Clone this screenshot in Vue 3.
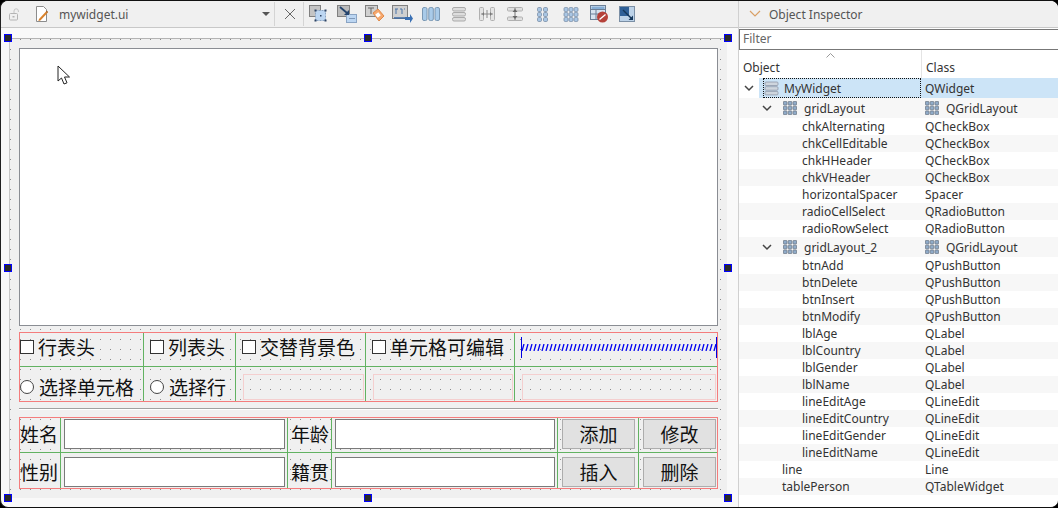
<script setup>
const tree = [
  { name: 'gridLayout', cls: 'QGridLayout', depth: 1, group: true },
  { name: 'chkAlternating', cls: 'QCheckBox', depth: 2 },
  { name: 'chkCellEditable', cls: 'QCheckBox', depth: 2 },
  { name: 'chkHHeader', cls: 'QCheckBox', depth: 2 },
  { name: 'chkVHeader', cls: 'QCheckBox', depth: 2 },
  { name: 'horizontalSpacer', cls: 'Spacer', depth: 2 },
  { name: 'radioCellSelect', cls: 'QRadioButton', depth: 2 },
  { name: 'radioRowSelect', cls: 'QRadioButton', depth: 2 },
  { name: 'gridLayout_2', cls: 'QGridLayout', depth: 1, group: true },
  { name: 'btnAdd', cls: 'QPushButton', depth: 2 },
  { name: 'btnDelete', cls: 'QPushButton', depth: 2 },
  { name: 'btnInsert', cls: 'QPushButton', depth: 2 },
  { name: 'btnModify', cls: 'QPushButton', depth: 2 },
  { name: 'lblAge', cls: 'QLabel', depth: 2 },
  { name: 'lblCountry', cls: 'QLabel', depth: 2 },
  { name: 'lblGender', cls: 'QLabel', depth: 2 },
  { name: 'lblName', cls: 'QLabel', depth: 2 },
  { name: 'lineEditAge', cls: 'QLineEdit', depth: 2 },
  { name: 'lineEditCountry', cls: 'QLineEdit', depth: 2 },
  { name: 'lineEditGender', cls: 'QLineEdit', depth: 2 },
  { name: 'lineEditName', cls: 'QLineEdit', depth: 2 },
  { name: 'line', cls: 'Line', depth: 0 },
  { name: 'tablePerson', cls: 'QTableWidget', depth: 0 }
]

const handles = [
  [8, 38], [368, 38], [728, 38],
  [8, 268], [728, 268],
  [8, 498], [368, 498], [728, 498]
]

// dots of the grid-layout icon
const dots3 = [0, 1, 2].flatMap((y) => [0, 1, 2].map((x) => [x, y]))
</script>

<template>
  <div class="designer">
    <div class="left">
      <div class="toolbar">
        <svg class="lock" width="12" height="13" viewBox="0 0 12 13">
          <rect x="1.5" y="5.5" width="8" height="6.5" rx="1" fill="none" stroke="#b4b4b4" />
          <path d="M6 5V3a2.2 2.2 0 0 1 4.4 0v1" fill="none" stroke="#c4c4c4" />
          <rect x="4.5" y="8" width="2" height="1.5" fill="#b4b4b4" />
        </svg>
        <svg class="file" width="14" height="18" viewBox="0 0 14 18">
          <path d="M1.5 1.5h7l3 3v12h-10z" fill="#fff" stroke="#8c8c8c" />
          <path d="M4 14l-.6 2 2-.6 7-7.4-1.4-1.4z" fill="#d9822b" />
          <path d="M11 6.600l1.400 1.400 .8-.9-1.400-1.400z" fill="#a85a14" />
        </svg>
        <span class="file-name">mywidget.ui</span>
        <span class="combo-arrow"></span>
        <span class="sep"></span>
        <svg class="close" width="12" height="12" viewBox="0 0 12 12">
          <path d="M1 1l10 10M11 1L1 11" stroke="#666" fill="none" />
        </svg>
        <span class="sep"></span>
        <div class="tools">
          <!-- edit widgets -->
          <svg width="22" height="20" viewBox="0 0 22 20">
            <rect x="1.500" y="1.500" width="11" height="11" fill="#c4c4c4" stroke="#808080" />
            <rect x="7.500" y="6.500" width="10" height="10" fill="#bcd6f2" stroke="#8aa4c4" stroke-dasharray="2 1" />
            <rect x="6.500" y="5.500" width="2" height="2" fill="#2c4262" />
            <rect x="16.500" y="5.500" width="2" height="2" fill="#2c4262" />
            <rect x="6.500" y="15.500" width="2" height="2" fill="#2c4262" />
            <rect x="16.500" y="15.500" width="2" height="2" fill="#2c4262" />
            <rect x="12" y="11" width="1.500" height="1.500" fill="#2c4262" />
          </svg>
          <!-- edit signals -->
          <svg width="22" height="20" viewBox="0 0 22 20">
            <rect x="1.500" y="1.500" width="12" height="11" fill="#bbb" stroke="#808080" />
            <rect x="10.500" y="10.500" width="10" height="8" fill="#bcd6f2" stroke="#8aa4c4" />
            <path d="M4 3l7 6" stroke="#24446e" stroke-width="1.800" />
            <path d="M8 11h5V6z" fill="#24446e" />
            <path d="M13 14.500h6" stroke="#7f98b8" />
          </svg>
          <!-- edit buddies -->
          <svg width="22" height="20" viewBox="0 0 22 20">
            <rect x="1.500" y="1.500" width="12" height="11" fill="#d0d0d0" stroke="#808080" />
            <path d="M4 4h6M7 4v6" stroke="#666" />
            <path d="M9 9l5-4 6 7-5 5z" fill="#f7a86d" stroke="#e08a4a" />
            <rect x="12" y="9" width="4" height="4" fill="#fff" transform="rotate(-40 14 11)" />
          </svg>
          <!-- edit tab order -->
          <svg width="24" height="20" viewBox="0 0 24 20">
            <rect x="1.500" y="1.500" width="15" height="13" fill="#d0d0d0" stroke="#808080" />
            <path d="M4 5h3M5 5v5M9 5h2v5M13 5h1" stroke="#4a74a8" fill="none" />
            <path d="M3 14h14" stroke="#3d6aa4" stroke-width="1.500" />
            <path d="M14 13h5v-3l3 4.500-3 4.500v-3h-5z" fill="#3a70b4" />
          </svg>
          <!-- vertical columns -->
          <svg width="20" height="20" viewBox="0 0 20 20">
            <rect x="1.500" y="3.500" width="4.500" height="13" rx="1.500" fill="#a9cbe9" stroke="#7a98b4" />
            <rect x="7.800" y="3.500" width="4.500" height="13" rx="1.500" fill="#a9cbe9" stroke="#7a98b4" />
            <rect x="14" y="3.500" width="4.500" height="13" rx="1.500" fill="#a9cbe9" stroke="#7a98b4" />
          </svg>
          <!-- horizontal rows, disabled -->
          <svg width="20" height="20" viewBox="0 0 20 20">
            <rect x="3.500" y="3.500" width="13" height="3.500" rx="1.500" fill="#ddd" stroke="#aaa" />
            <rect x="3.500" y="8.500" width="13" height="3.500" rx="1.500" fill="#ddd" stroke="#aaa" />
            <rect x="3.500" y="13.500" width="13" height="3.500" rx="1.500" fill="#ddd" stroke="#aaa" />
          </svg>
          <!-- splitter h -->
          <svg width="20" height="20" viewBox="0 0 20 20">
            <rect x="2.500" y="3.500" width="4" height="13" rx="1" fill="#e4e4e4" stroke="#b0b0b0" />
            <rect x="13.500" y="3.500" width="4" height="13" rx="1" fill="#e4e4e4" stroke="#b0b0b0" />
            <path d="M4 10h12M10 6v8" stroke="#8a8a8a" />
            <path d="M7 8v4l-2-2zM13 8v4l2-2z" fill="#777" />
          </svg>
          <!-- splitter v -->
          <svg width="20" height="20" viewBox="0 0 20 20">
            <rect x="2.500" y="3.500" width="15" height="3.500" rx="1" fill="#e0e0e0" stroke="#b0b0b0" />
            <rect x="2.500" y="13" width="15" height="3.500" rx="1" fill="#e0e0e0" stroke="#b0b0b0" />
            <path d="M10 4v12" stroke="#777" />
            <path d="M7.500 8h5L10 5zM7.500 12h5L10 15z" fill="#666" />
          </svg>
          <!-- form layout -->
          <svg width="20" height="20" viewBox="0 0 20 20">
            <g v-for="y in [0, 1, 2]" :key="y">
              <rect x="4.500" :y="3.500 + y * 5" width="4" height="4" rx="1.200" fill="#a9c6e4" stroke="#7a8ea6" stroke-width=".8" />
              <rect x="10.500" :y="3.500 + y * 5" width="4" height="4" rx="1.200" fill="#a9c6e4" stroke="#7a8ea6" stroke-width=".8" />
            </g>
          </svg>
          <!-- grid layout -->
          <svg width="20" height="20" viewBox="0 0 20 20">
            <rect v-for="d in dots3" :key="d.join()" :x="3 + d[0] * 5" :y="3.500 + d[1] * 5" width="4" height="4" rx="1.200" fill="#a9c6e4" stroke="#7a8ea6" stroke-width=".8" />
          </svg>
          <!-- break layout -->
          <svg width="22" height="20" viewBox="0 0 22 20">
            <rect x="2.500" y="1.500" width="15" height="14" fill="#d8e4f0" stroke="#6c7f96" />
            <path d="M2.500 5.500h15M2.500 10h15M8 5.500V15.500" stroke="#6c7f96" />
            <rect x="3.500" y="2.500" width="13" height="2.500" fill="#86aed6" />
            <circle cx="14.500" cy="13" r="5.500" fill="#b5423a" />
            <path d="M11.500 15.500l6-5" stroke="#fff" stroke-width="1.400" />
          </svg>
          <!-- adjust size -->
          <svg width="20" height="20" viewBox="0 0 20 20">
            <rect x="2.500" y="2.500" width="15" height="15" fill="#bcd2e8" stroke="#7b8fa5" />
            <rect x="3" y="3" width="9" height="9" fill="#2f6098" />
            <path d="M6 6l9 9" stroke="#14365a" stroke-width="1.400" />
            <path d="M16 16h-4.500L16 11.500z" fill="#14365a" />
          </svg>
        </div>
      </div>

      <div class="stage">
        <div class="form">
          <div class="table-box"></div>

          <div class="layout options">
            <label class="cell first top"><i class="check"></i>行表头</label>
            <label class="cell top"><i class="check"></i>列表头</label>
            <label class="cell top"><i class="check"></i>交替背景色</label>
            <label class="cell top"><i class="check"></i>单元格可编辑</label>
            <div class="cell top spacer-cell">
              <svg class="spring" height="21">
                <defs>
                  <pattern id="coil" width="4" height="7" patternUnits="userSpaceOnUse" y="7">
                    <path d="M1 7l2-7" stroke="#0000f0" stroke-width="1.300" fill="none" />
                  </pattern>
                </defs>
                <rect x="0" y="7" width="100%" height="7" fill="url(#coil)" />
                <rect x="0" y="0" width="1" height="21" fill="#0000e0" />
                <rect x="100%" y="0" width="1" height="21" fill="#0000e0" transform="translate(-1 0)" />
              </svg>
            </div>
            <label class="cell first row2"><i class="radio"></i>选择单元格</label>
            <label class="cell row2"><i class="radio"></i>选择行</label>
            <div class="cell row2 empty"><div class="empty-box"></div></div>
            <div class="cell row2 empty"><div class="empty-box"></div></div>
            <div class="cell row2 empty"><div class="empty-box"></div></div>
          </div>

          <div class="hline"></div>

          <div class="layout fields">
            <span class="cell first top lbl">姓名</span>
            <div class="cell top"><div class="edit"></div></div>
            <span class="cell top lbl">年龄</span>
            <div class="cell top"><div class="edit"></div></div>
            <div class="cell top"><button class="btn">添加</button></div>
            <div class="cell top"><button class="btn last">修改</button></div>
            <span class="cell first row2 lbl">性别</span>
            <div class="cell row2"><div class="edit"></div></div>
            <span class="cell row2 lbl">籍贯</span>
            <div class="cell row2"><div class="edit"></div></div>
            <div class="cell row2"><button class="btn">插入</button></div>
            <div class="cell row2"><button class="btn last">删除</button></div>
          </div>
        </div>

        <svg class="cursor" width="14" height="20" viewBox="0 0 14 20">
          <path d="M1 1v15l3.500-3 2.500 6 3-1.200-2.500-5.800H12.500z" fill="#fff" stroke="#222" stroke-width="1" />
        </svg>
        <span v-for="h in handles" :key="h.join()" class="handle" :style="{ left: h[0] - 5 + 'px', top: h[1] - 32 + 'px' }"></span>
      </div>
    </div>

    <div class="inspector">
      <div class="title">
        <svg width="12" height="8" viewBox="0 0 12 8"><path d="M1 1l5 5 5-5" fill="none" stroke="#d9a066" stroke-width="1.200" /></svg>
        <span>Object Inspector</span>
      </div>
      <div class="filter">Filter</div>
      <div class="header">
        <span class="h-object">Object</span>
        <svg class="caret" width="9" height="5" viewBox="0 0 9 5"><path d="M.5 4.500l4-4 4 4" fill="none" stroke="#999" /></svg>
        <span class="h-class">Class</span>
      </div>

      <div class="root-row">
        <svg class="arrow" width="10" height="7" viewBox="0 0 10 7"><path d="M1 1l4 4 4-4" fill="none" stroke="#444" stroke-width="1.500" /></svg>
        <div class="root-name">
          <svg width="15" height="15" viewBox="0 0 15 15">
            <rect x="1" y="1" width="13" height="3.500" rx="1" fill="#cfd6de" stroke="#8f98a8" stroke-width=".8" />
            <rect x="1" y="5.700" width="13" height="3.500" rx="1" fill="#cfd6de" stroke="#8f98a8" stroke-width=".8" />
            <rect x="1" y="10.400" width="13" height="3.500" rx="1" fill="#cfd6de" stroke="#8f98a8" stroke-width=".8" />
          </svg>
          <span>MyWidget</span>
        </div>
        <span class="root-class">QWidget</span>
      </div>

      <div
        v-for="(row, i) in tree"
        :key="row.name"
        class="row"
        :class="['depth-' + row.depth, { group: row.group, alt: i % 2 === 0 }]"
      >
        <div class="r-name">
          <template v-if="row.group">
            <svg class="arrow" width="10" height="7" viewBox="0 0 10 7"><path d="M1 1l4 4 4-4" fill="none" stroke="#444" stroke-width="1.500" /></svg>
            <svg class="grid-ic" width="14" height="14" viewBox="0 0 14 14">
              <rect v-for="d in dots3" :key="d.join()" :x="d[0] * 4.800 + .4" :y="d[1] * 4.800 + .4" width="3.600" height="3.600" rx=".6" fill="#8fabc9" stroke="#6f7a88" stroke-width=".8" />
            </svg>
          </template>
          <span>{{ row.name }}</span>
        </div>
        <div class="r-class">
          <svg v-if="row.group" class="grid-ic" width="14" height="14" viewBox="0 0 14 14">
            <rect v-for="d in dots3" :key="d.join()" :x="d[0] * 4.800 + .4" :y="d[1] * 4.800 + .4" width="3.600" height="3.600" rx=".6" fill="#8fabc9" stroke="#6f7a88" stroke-width=".8" />
          </svg>
          <span>{{ row.cls }}</span>
        </div>
      </div>
    </div>
  </div>
</template>

<style>
html, body {
  margin: 0;
  background: #000;
}
</style>

<style scoped>
.designer {
  width: 1058px;
  height: 508px;
  display: flex;
  overflow: hidden;
  box-sizing: border-box;
  border-top: 1px solid #111;
  border-bottom: 1px solid #111;
  border-left: 1px solid #222;
  border-radius: 8px;
  background: #f9f9f9;
  font-family: "Noto Sans", "Noto Sans CJK SC", sans-serif;
}

/* left side */
.left {
  width: 737px;
  flex-shrink: 0;
  border-right: 1px solid #d0d0d0;
  display: flex;
  flex-direction: column;
  position: relative;
}

.toolbar {
  height: 26px;
  flex-shrink: 0;
  display: flex;
  align-items: center;
  background: #f0f0f0;
  border-bottom: 1px solid #c8c8c8;
}

.lock {
  margin-left: 7px;
}

.file {
  margin-left: 15px;
}

.file-name {
  margin-left: 10px;
  width: 203px;
  font-size: 12px;
  color: #555;
}

.combo-arrow {
  width: 0;
  height: 0;
  border-left: 4px solid transparent;
  border-right: 4px solid transparent;
  border-top: 4px solid #555;
  margin-right: 4px;
}

.sep {
  width: 1px;
  height: 24px;
  background: #d4d4d4;
}

.close {
  margin: 0 7px 0 9px;
}

.tools {
  display: flex;
  align-items: center;
  margin-left: 3px;
}

.tools svg {
  width: 24px;
  margin-right: 4px;
}

.stage {
  flex: 1;
  position: relative;
  padding: 10px 9px 9px 8px;
}

.form {
  width: 718px;
  height: 460px;
  box-sizing: border-box;
  padding: 10px 9px 0 9px;
  background-color: #f0f0f0;
  background-image: radial-gradient(circle at 0.5px 0.5px, #8c8c8c 0.7px, transparent 0.9px);
  background-size: 10px 10px;
  border-top: 1px solid #b4b4b4;
  border-left: 1px solid #c8c8c8;
  display: flex;
  flex-direction: column;
}

.table-box {
  height: 276px;
  flex-shrink: 0;
  background: #fff;
  border: 1px solid #8a8d93;
  margin-top: -1px;
}

.layout {
  display: grid;
  border: 1px solid #f47c7c;
  box-sizing: border-box;
  flex-shrink: 0;
}

.options {
  margin-top: 6px;
  height: 70px;
  grid-template-columns: 123px 92px 130px 149px 1fr;
  grid-template-rows: 33px 1fr;
}

.fields {
  margin-top: 7px;
  height: 72px;
  grid-template-columns: 40px 227px 44px 226px 81px 1fr;
  grid-template-rows: 34px 1fr;
}

.cell {
  display: flex;
  align-items: center;
  min-width: 0;
  box-sizing: border-box;
  border-left: 1px solid #62b262;
  font-size: 19px;
  color: #111;
  white-space: nowrap;
}

.cell.first {
  border-left: 0;
}

.row2 {
  border-top: 1px solid #62b262;
}

.options .top {
  padding-bottom: 5px;
}

.options .row2 {
  padding-top: 6px;
}

.fields .top {
  padding-bottom: 2px;
}

.fields .row2 {
  padding-top: 3px;
}

.check,
.radio {
  width: 12px;
  height: 12px;
  background: #fff;
  margin: 0 5px 0 6px;
  flex-shrink: 0;
}

.check {
  border: 1px solid #333;
  margin-right: 4px;
}

.radio {
  border: 1px solid #444;
  border-radius: 50%;
}

.first .check,
.first .radio {
  margin-left: 0;
}

.spacer-cell {
  padding-left: 6px;
}

.spring {
  flex: 1;
  min-width: 0;
}

.empty {
  padding-left: 7px;
  padding-right: 1px;
}

.empty-box {
  flex: 1;
  height: 26px;
  box-sizing: border-box;
  border: 1px solid #f4cfcf;
}

.hline {
  margin-top: 6px;
  height: 2px;
  box-sizing: border-box;
  border-top: 1px solid #a0a0a0;
  border-bottom: 1px solid #fff;
  flex-shrink: 0;
}

.lbl {
  padding-left: 3px;
}

.lbl.first {
  padding-left: 0;
}

.edit {
  flex: 1;
  height: 30px;
  box-sizing: border-box;
  margin: 0 2px 0 3px;
  background: #fff;
  border: 1px solid #7a7a7a;
}

.btn {
  flex: 1;
  height: 30px;
  min-width: 0;
  box-sizing: border-box;
  margin: 0 3px 0 4px;
  background: #e1e1e1;
  border: 1px solid #adadad;
  padding: 0;
  font: inherit;
  color: #111;
}

.btn.last {
  margin-right: 1px;
}

.cursor {
  position: absolute;
  left: 56px;
  top: 37px;
}

.handle {
  position: absolute;
  width: 6px;
  height: 6px;
  background: #2a2a2a;
  border: 1px solid #0000ff;
}

/* right side */
.inspector {
  flex: 1;
  min-width: 0;
  font-size: 12px;
  color: #333;
  background: #fff;
  display: flex;
  flex-direction: column;
}

.title {
  height: 26px;
  flex-shrink: 0;
  display: flex;
  align-items: center;
  gap: 8px;
  padding-left: 10px;
  background: #f0f0f0;
  border-bottom: 1px solid #c8c8c8;
  color: #555;
}

.filter {
  height: 21px;
  flex-shrink: 0;
  box-sizing: border-box;
  margin-top: 1px;
  padding: 1px 3px;
  background: #fff;
  border: 1px solid #777;
  border-right: 0;
  color: #666;
  line-height: 15px;
}

.header {
  height: 29px;
  flex-shrink: 0;
  position: relative;
  box-sizing: border-box;
  background: #fff;
}

.h-object {
  position: absolute;
  left: 4px;
  top: 9px;
}

.h-class {
  position: absolute;
  left: 182px;
  top: 9px;
  padding-left: 4px;
  border-left: 1px solid #e4e4e4;
  height: 21px;
  margin-top: -9px;
  padding-top: 9px;
}

.caret {
  position: absolute;
  left: 87px;
  top: 3px;
}

.root-row {
  height: 20px;
  flex-shrink: 0;
  display: flex;
  align-items: center;
  position: relative;
  margin-top: -1px;
  background: linear-gradient(90deg, #fff 20px, #cce4f7 20px);
}

.root-row .arrow {
  position: absolute;
  left: 5px;
  top: 7px;
}

.root-name {
  margin-left: 24px;
  width: 158px;
  height: 20px;
  box-sizing: border-box;
  display: flex;
  align-items: center;
  gap: 5px;
  border: 1px dotted #111;
  flex-shrink: 0;
}

.root-class {
  margin-left: 4px;
}

.row {
  height: 17px;
  flex-shrink: 0;
  display: flex;
  align-items: center;
  line-height: 17px;
  white-space: nowrap;
}

.row.group {
  height: 20px;
}

.row.alt {
  background: #f7f7f7;
}

.r-name {
  width: 186px;
  flex-shrink: 0;
  display: flex;
  align-items: center;
  box-sizing: border-box;
}

.depth-0 .r-name {
  padding-left: 43px;
}

.depth-1 .r-name {
  padding-left: 23px;
}

.depth-2 .r-name {
  padding-left: 63px;
}

.r-name .grid-ic {
  margin: 0 7px 0 11px;
}

.r-class {
  display: flex;
  align-items: center;
  gap: 7px;
}
</style>
